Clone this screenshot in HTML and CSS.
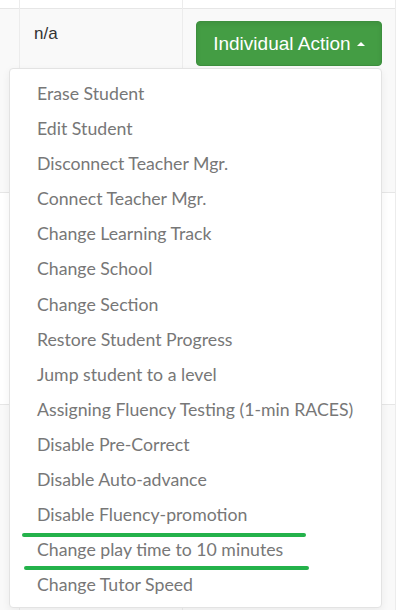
FILE: index.html
```html
<!DOCTYPE html>
<html>
<head>
<meta charset="utf-8">
<link rel="stylesheet" href="styles.css">
</head>
<body>
<div class="table">
  <div class="row row-top">
    <div class="cell c1"></div>
    <div class="cell c2"></div>
    <div class="cell c3"></div>
  </div>
  <div class="row row-main striped">
    <div class="cell c1"></div>
    <div class="cell c2"><span class="na">n/a</span></div>
    <div class="cell c3">
      <div class="btn-group">
        <button class="btn">Individual Action <span class="caret"></span></button>
        <ul class="menu">
          <li>Erase Student</li>
          <li>Edit Student</li>
          <li>Disconnect Teacher Mgr.</li>
          <li>Connect Teacher Mgr.</li>
          <li>Change Learning Track</li>
          <li>Change School</li>
          <li>Change Section</li>
          <li>Restore Student Progress</li>
          <li>Jump student to a level</li>
          <li>Assigning Fluency Testing (1-min RACES)</li>
          <li>Disable Pre-Correct</li>
          <li>Disable Auto-advance</li>
          <li>Disable Fluency-promotion</li>
          <li>Change play time to 10 minutes</li>
          <li>Change Tutor Speed</li>
        </ul>
      </div>
    </div>
  </div>
  <div class="row row-mid">
    <div class="cell c1"></div>
    <div class="cell c2"></div>
    <div class="cell c3"></div>
  </div>
  <div class="row row-low striped">
    <div class="cell c1"></div>
    <div class="cell c2"></div>
    <div class="cell c3"></div>
  </div>
</div>
<div class="mark mark-1"></div>
<div class="mark mark-2"></div>
</body>
</html>
```

FILE: styles.css
```css
html, body {
  margin: 0;
  padding: 0;
  background: #ffffff;
  font-family: "Liberation Sans", Arial, sans-serif;
  overflow: hidden;
}

body {
  height: 610px;
}

.table {
  width: 396px;
  border-right: 1px solid #ececec;
  box-sizing: border-box;
}

.row {
  display: grid;
  grid-template-columns: 20px 163px 1fr;
  border-bottom: 1px solid #e6e6e6;
  box-sizing: border-box;
}

.striped {
  background: #f9f9f9;
}

.row-top { height: 9px; }
.row-main { height: 184px; }
.row-mid { height: 212px; }
.row-low { height: 205px; border-bottom: none; }

.cell {
  border-right: 1px solid #ececec;
}
.cell.c3 {
  border-right: none;
}

.c2 {
  padding: 13px 0 0 14px;
}

.na {
  font-size: 17px;
  line-height: 24px;
  color: #333333;
}

.c3 {
  padding: 12px 0 0 13px;
}

.btn-group {
  position: relative;
  display: inline-block;
}

.btn {
  display: block;
  margin: 0;
  width: 186px;
  height: 45px;
  padding: 8px 0;
  border: 1px solid #3d8f3e;
  border-radius: 4px;
  background: #449d44;
  color: #ffffff;
  font-family: "Liberation Sans", Arial, sans-serif;
  font-size: 19px;
  line-height: 27px;
  text-align: center;
  box-shadow: inset 0 2px 4px rgba(0, 0, 0, 0.08);
  cursor: pointer;
  white-space: nowrap;
}

.caret {
  display: inline-block;
  width: 0;
  height: 0;
  margin-left: 1px;
  vertical-align: 4px;
  border-left: 4px solid transparent;
  border-right: 4px solid transparent;
  border-bottom: 4px solid #ffffff;
}

.menu {
  position: absolute;
  top: 100%;
  right: 0;
  margin: 2px 0 0 0;
  width: 373px;
  box-sizing: border-box;
  list-style: none;
  padding: 7px 0 5px 0;
  background: #ffffff;
  border: 1px solid #e3e3e3;
  border-radius: 4px;
  box-shadow: 0 3px 8px rgba(0, 0, 0, 0.06);
  z-index: 5;
}

.menu li {
  padding: 7px 0 7px 27px;
  font-family: Lato, "Open Sans", sans-serif;
  font-size: 17.7px;
  line-height: 21.1px;
  color: #777777;
  white-space: nowrap;
}

.mark {
  position: absolute;
  height: 4px;
  border-radius: 2px;
  background: #24b24b;
  z-index: 10;
}
.mark-1 {
  left: 22px;
  top: 533px;
  width: 284px;
}
.mark-2 {
  left: 24px;
  top: 566px;
  width: 285px;
}
```
